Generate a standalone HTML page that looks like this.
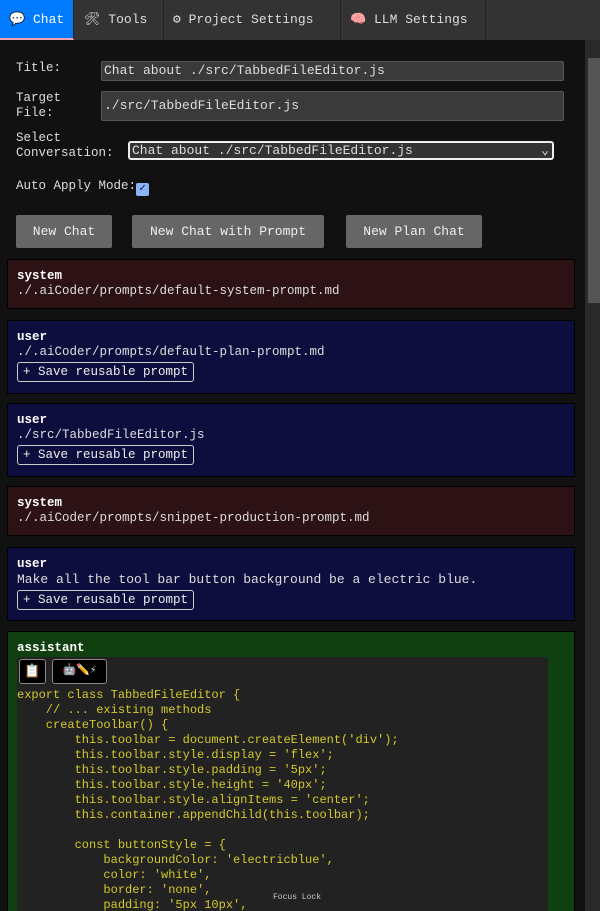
<!DOCTYPE html>
<html><head><meta charset="utf-8"><style>
*{box-sizing:border-box;margin:0;padding:0}
html,body{width:600px;height:911px;overflow:hidden}
body{background:#111;font-family:"Liberation Mono","DejaVu Sans Mono",monospace;font-size:12.5px;color:#ddd;position:relative}
.tabs{position:absolute;top:0;left:0;width:600px;height:40px;background:#333}
.tab{position:absolute;top:0;height:40px;line-height:40px;padding-left:9px;border-right:1px solid #222;color:#ddd;font-size:13px;white-space:nowrap;overflow:hidden}
.tab.a{background:#007bff;color:#fff;border-bottom:2px solid #f0a0b0}
.sb{position:absolute;left:585px;top:40px;width:15px;height:871px;background:#2a2a2a}
.thumb{position:absolute;left:588px;top:58px;width:12px;height:245px;background:#555}
.lbl{position:absolute;left:16px;line-height:15px}
.inp{position:absolute;left:101px;width:463px;background:#3a3a3a;border:1px solid #555;border-radius:2px;color:#ddd;padding-left:2px;font-size:13px}
.btn{position:absolute;top:215px;height:33px;line-height:33px;background:#666;color:#eee;text-align:center;border-radius:2px;font-size:13px}
.msg{position:absolute;left:7px;width:568px;border:1px solid #000;padding:9px 9px;line-height:15px;overflow:hidden}
.msg b{color:#fff}
.sv{display:inline-block;border:1px solid #ccc;border-radius:3px;padding:1px 5px;line-height:16px;margin-top:2px;color:#eee}
pre{font-family:"Liberation Mono",monospace;font-size:12px;color:#d4c92a;line-height:15px}
</style></head><body>
<div class="tabs">
<div class="tab a" style="left:0;width:74px">💬 Chat</div>
<div class="tab" style="left:75px;width:89px">🛠 Tools</div>
<div class="tab" style="left:164px;width:177px">⚙ Project Settings</div>
<div class="tab" style="left:341px;width:145px">🧠 LLM Settings</div>
</div>
<div class="sb"></div><div class="thumb"></div>
<div class="lbl" style="top:61px">Title:</div>
<div class="inp" style="top:61px;height:20px;line-height:18px">Chat about ./src/TabbedFileEditor.js</div>
<div class="lbl" style="top:91px">Target<br>File:</div>
<div class="inp" style="top:91px;height:30px;line-height:28px">./src/TabbedFileEditor.js</div>
<div class="lbl" style="top:131px">Select<br>Conversation:</div>
<div class="inp" style="top:141px;left:128px;width:426px;height:19px;line-height:15px;border:2px solid #eee;border-radius:3px;background:#333">Chat about ./src/TabbedFileEditor.js<span style="position:absolute;right:3px;top:0">⌄</span></div>
<div class="lbl" style="top:179px">Auto Apply Mode:<span style="display:inline-block;width:13px;height:13px;background:#8ab4f8;border-radius:2px;vertical-align:-2px;color:#113;font-size:11px;line-height:13px;text-align:center">✓</span></div>
<div class="btn" style="left:16px;width:96px">New Chat</div>
<div class="btn" style="left:132px;width:192px">New Chat with Prompt</div>
<div class="btn" style="left:346px;width:136px">New Plan Chat</div>
<div class="msg" style="top:259px;height:50px;background:#2c1214"><b>system</b><br>./.aiCoder/prompts/default-system-prompt.md</div>
<div class="msg" style="top:320px;height:74px;background:#0e0e3e"><b>user</b><br>./.aiCoder/prompts/default-plan-prompt.md<br><span class="sv">+ Save reusable prompt</span></div>
<div class="msg" style="top:403px;height:74px;background:#0e0e3e"><b>user</b><br>./src/TabbedFileEditor.js<br><span class="sv">+ Save reusable prompt</span></div>
<div class="msg" style="top:486px;height:50px;background:#2c1214"><b>system</b><br>./.aiCoder/prompts/snippet-production-prompt.md</div>
<div class="msg" style="top:547px;height:74px;background:#0e0e3e"><b>user</b><br><span style="font-size:13px">Make all the tool bar button background be a electric blue.</span><br><span class="sv">+ Save reusable prompt</span></div>
<div class="msg" style="top:631px;height:280px;background:#10400f;border-bottom:none"><b>assistant</b>
<div style="position:absolute;left:9px;top:25px;width:531px;height:260px;background:#222;border-radius:3px">
<div style="position:absolute;left:2px;top:2px;width:27px;height:25px;background:#000;border:1px solid #888;border-radius:3px;text-align:center;line-height:23px;font-size:13px">📋</div>
<div style="position:absolute;left:35px;top:2px;width:55px;height:25px;background:#000;border:1px solid #888;border-radius:3px;text-align:center;line-height:23px;font-size:11px">🤖✏️⚡</div>
<pre style="position:absolute;left:0;top:31px">export class TabbedFileEditor {
    // ... existing methods
    createToolbar() {
        this.toolbar = document.createElement('div');
        this.toolbar.style.display = 'flex';
        this.toolbar.style.padding = '5px';
        this.toolbar.style.height = '40px';
        this.toolbar.style.alignItems = 'center';
        this.container.appendChild(this.toolbar);

        const buttonStyle = {
            backgroundColor: 'electricblue',
            color: 'white',
            border: 'none',
            padding: '5px 10px',</pre>
<div style="position:absolute;left:256px;top:233px;font-size:8px;color:#ccc">Focus Lock</div>
</div></div>
</body></html>
